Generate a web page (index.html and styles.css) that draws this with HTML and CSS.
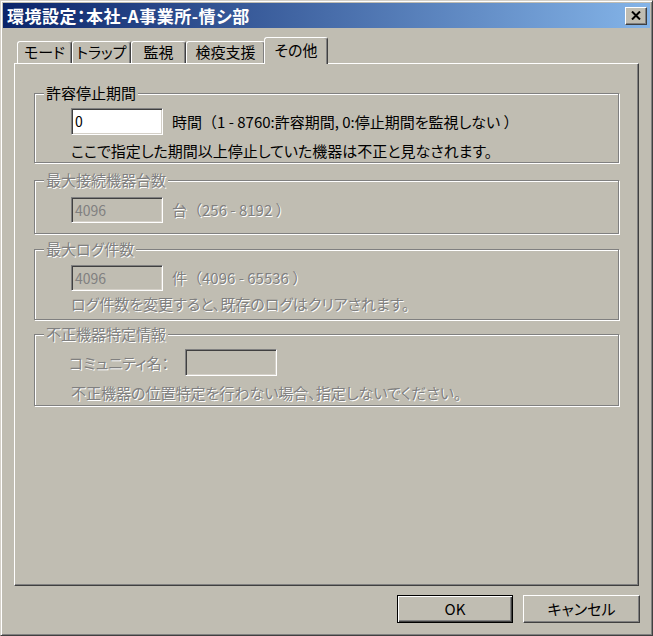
FILE: index.html
```html
<!DOCTYPE html>
<html lang="ja">
<head>
<meta charset="utf-8">
<title>環境設定</title>
<link rel="stylesheet" href="styles.css">
</head>
<body>
<div class="window">
  <div class="titlebar">
    <span class="title">環境設定：本社-A事業所-情シ部</span>
    <div class="close"><svg width="10" height="9" viewBox="0 0 10 9"><path d="M1 0.5 L9 8.5 M9 0.5 L1 8.5" stroke="#000" stroke-width="2" fill="none"/></svg></div>
  </div>
  <div class="client">
    <div class="tabs">
      <div class="tab t1">モード</div>
      <div class="tab t2">トラップ</div>
      <div class="tab t3">監視</div>
      <div class="tab t4">検疫支援</div>
      <div class="tab t5 active">その他</div>
    </div>
    <div class="panel">
      <fieldset class="group g1">
        <legend>許容停止期間</legend>
        <div class="gbody">
          <div class="row"><div class="field">0</div><span>時間<span class="fw">（</span>1 - 8760:許容期間, 0:停止期間を監視しない <span class="fw">）</span></span></div>
          <p class="note">ここで指定した期間以上停止していた機器は不正と見なされます。</p>
        </div>
      </fieldset>
      <fieldset class="group g2 disabled">
        <legend>最大接続機器台数</legend>
        <div class="gbody">
          <div class="row"><div class="field off">4096</div><span>台<span class="fw">（</span>256 - 8192 <span class="fw">）</span></span></div>
        </div>
      </fieldset>
      <fieldset class="group g3 disabled">
        <legend>最大ログ件数</legend>
        <div class="gbody">
          <div class="row"><div class="field off">4096</div><span>件<span class="fw">（</span>4096 - 65536 <span class="fw">）</span></span></div>
          <p class="note">ログ件数を変更すると、既存のログはクリアされます。</p>
        </div>
      </fieldset>
      <fieldset class="group g4 disabled">
        <legend>不正機器特定情報</legend>
        <div class="gbody">
          <div class="row"><span class="label">コミュニティ名：</span><div class="field off"></div></div>
          <p class="note">不正機器の位置特定を行わない場合、指定しないでください。</p>
        </div>
      </fieldset>
    </div>
    <div class="buttons">
      <div class="btn default">OK</div>
      <div class="btn cancel">キャンセル</div>
    </div>
  </div>
</div>
</body>
</html>
```
FILE: styles.css
```css
* { box-sizing: border-box; }
html, body { margin: 0; padding: 0; }
body {
  background: #c0bdb2;
  font-family: "Noto Sans CJK JP", "Noto Sans", sans-serif;
  font-size: 15px;
  font-feature-settings: "palt";
  color: #000;
}
.window {
  width: 653px;
  height: 636px;
  display: flex;
  flex-direction: column;
  background: #c0bdb2;
  border: 1px solid;
  border-color: #d4d0c8 #404040 #404040 #d4d0c8;
  box-shadow: inset 1px 1px 0 #fff, inset -1px -1px 0 #808080;
  padding: 2px;
}
.titlebar {
  height: 25px;
  flex: none;
  display: flex;
  align-items: center;
  background: linear-gradient(to right, #0a246a, #84b4e8);
  padding: 0 3px 0 4px;
}
.title {
  color: #fff;
  font-weight: bold;
  font-size: 17px;
  line-height: 20px;
  letter-spacing: 0.5px;
}
.close {
  margin-left: auto;
  width: 22px;
  height: 18px;
  display: flex;
  align-items: center;
  justify-content: center;
  background: #c0bdb2;
  border: 1px solid;
  border-color: #fff #404040 #404040 #fff;
  box-shadow: inset -1px -1px 0 #808080;
}
.client {
  flex: 1;
  display: flex;
  flex-direction: column;
  padding: 9px 11px 10px 11px;
}
.tabs {
  height: 26px;
  flex: none;
  display: flex;
  align-items: flex-end;
  padding-left: 3px;
  position: relative;
  z-index: 1;
}
.tab {
  height: 22px;
  line-height: 20px;
  text-align: center;
  background: #c0bdb2;
  border: 1px solid;
  border-bottom: none;
  border-color: #fff #404040 transparent #fff;
  border-radius: 3px 3px 0 0;
  box-shadow: inset -1px 0 0 #808080;
}
.t1 { width: 55px; }
.t2 { width: 59px; }
.t3 { width: 55px; }
.t4 { width: 79px; }
.tab.active {
  width: 64px;
  height: 27px;
  margin: 0 0 -1px -1px;
  padding-top: 2px;
  position: relative;
  z-index: 2;
}
.panel {
  flex: 1;
  border: 1px solid;
  border-color: #fff #404040 #404040 #fff;
  box-shadow: inset -1px -1px 0 #808080;
  padding: 21px 19px 0 19px;
  display: flex;
  flex-direction: column;
}
.group {
  margin: 0;
  padding: 0;
  min-width: 0;
  border: 1px solid #808080;
  box-shadow: 1px 1px 0 #fff, inset 1px 1px 0 #fff;
}
.group legend {
  margin-left: 9px;
  padding: 0 2px;
  height: 16px;
  line-height: 16px;
  background: #c0bdb2;
}
.gbody {
  padding-left: 36px;
}
.row {
  display: flex;
  align-items: center;
  gap: 9px;
  line-height: 18px;
}
.fw { font-feature-settings: normal; }
.field {
  width: 92px;
  height: 27px;
  background: #fff;
  border: 1px solid;
  border-color: #808080 #fff #fff #808080;
  box-shadow: inset 1px 1px 0 #404040, inset -1px -1px 0 #d4d0c8;
  padding: 2px 3px;
  line-height: 20px;
  font-size: 14px;
}
.field.off {
  background: #c0bdb2;
  color: #808080;
}
.note {
  margin: 0;
  line-height: 18px;
}
.disabled legend,
.disabled .row > span,
.disabled .note {
  color: #808080;
  text-shadow: 1px 1px 0 #fff;
}
.g1 .row { margin-top: 7px; }
.g1 .note { margin-top: 7px; padding-bottom: 2px; }
.g2 { margin-top: 9px; }
.g2 .row { margin-top: 9px; padding-bottom: 10px; }
.g2 .field { height: 26px; }
.g3 { margin-top: 7px; }
.g3 .row { margin-top: 8px; }
.g3 .field { height: 26px; }
.g3 .note { margin-top: 4px; padding-bottom: 6px; }
.g4 { margin-top: 6px; }
.g4 .row { margin-top: 7px; gap: 0; }
.g4 .label { width: 116px; margin-left: -2px; }
.g4 .note { margin-top: 8px; padding-bottom: 3px; }
.buttons {
  flex: none;
  display: flex;
  justify-content: flex-end;
  gap: 10px;
  margin-top: 9px;
  margin-right: -1px;
}
.btn {
  width: 116px;
  height: 28px;
  display: flex;
  align-items: center;
  justify-content: center;
  background: #c0bdb2;
  border: 1px solid;
  border-color: #fff #404040 #404040 #fff;
  box-shadow: inset -1px -1px 0 #808080;
  line-height: 18px;
}
.btn.default {
  border-color: #000;
  box-shadow: inset 1px 1px 0 #fff, inset -1px -1px 0 #404040, inset -2px -2px 0 #808080;
}
.btn.cancel { width: 117px; }
```
